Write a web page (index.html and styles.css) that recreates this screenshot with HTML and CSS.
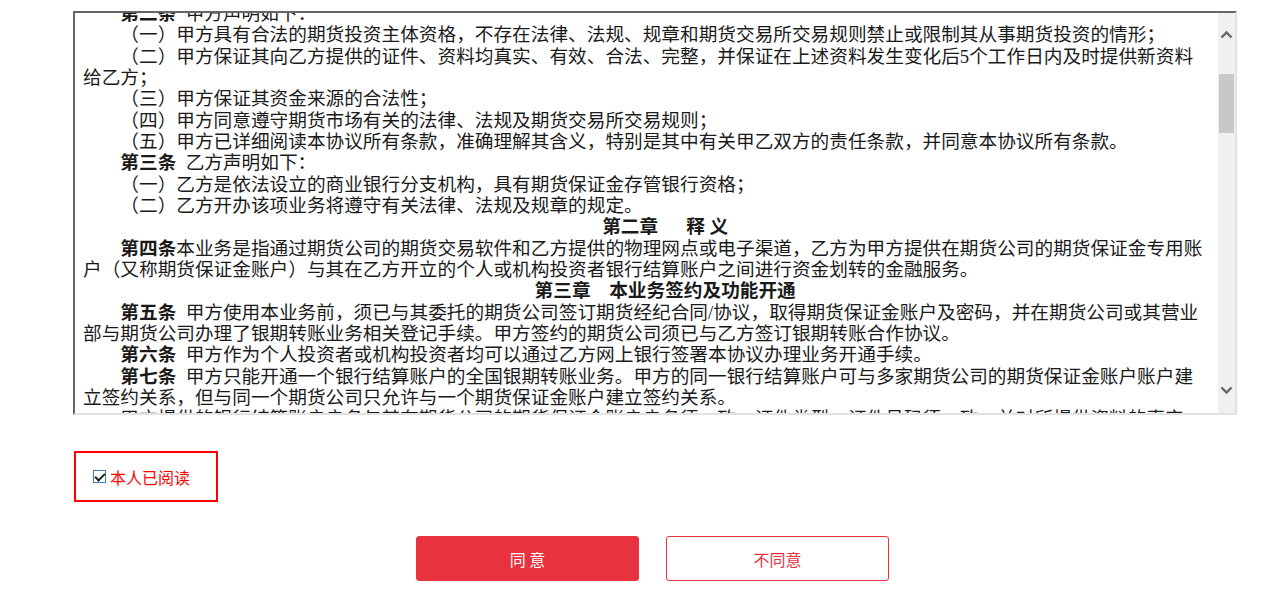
FILE: index.html
```html
<!DOCTYPE html>
<html lang="zh-CN">
<head>
    <meta charset="UTF-8">
    <meta name="viewport" content="width=device-width, initial-scale=1.0">
    <title>银期转账业务协议</title>
    <link rel="stylesheet" href="styles.css">
</head>
<body>

    <div class="container">
        <!-- agreement text, shown scrolled a little way down -->
        <div class="agreement">
            <div class="agreement-view">
                <div class="agreement-text">
                    <p><b>第二条</b>&ensp;甲方声明如下：</p>
                    <p>（一）甲方具有合法的期货投资主体资格，不存在法律、法规、规章和期货交易所交易规则禁止或限制其从事期货投资的情形；</p>
                    <p>（二）甲方保证其向乙方提供的证件、资料均真实、有效、合法、完整，并保证在上述资料发生变化后5个工作日内及时提供新资料给乙方；</p>
                    <p>（三）甲方保证其资金来源的合法性；</p>
                    <p>（四）甲方同意遵守期货市场有关的法律、法规及期货交易所交易规则；</p>
                    <p>（五）甲方已详细阅读本协议所有条款，准确理解其含义，特别是其中有关甲乙双方的责任条款，并同意本协议所有条款。</p>
                    <p><b>第三条</b>&ensp;乙方声明如下：</p>
                    <p>（一）乙方是依法设立的商业银行分支机构，具有期货保证金存管银行资格；</p>
                    <p>（二）乙方开办该项业务将遵守有关法律、法规及规章的规定。</p>
                    <p class="chapter">第二章　&nbsp;&nbsp;释&nbsp;义</p>
                    <p><b>第四条</b>本业务是指通过期货公司的期货交易软件和乙方提供的物理网点或电子渠道，乙方为甲方提供在期货公司的期货保证金专用账户（又称期货保证金账户）与其在乙方开立的个人或机构投资者银行结算账户之间进行资金划转的金融服务。</p>
                    <p class="chapter">第三章　本业务签约及功能开通</p>
                    <p><b>第五条</b>&ensp;甲方使用本业务前，须已与其委托的期货公司签订期货经纪合同/协议，取得期货保证金账户及密码，并在期货公司或其营业部与期货公司办理了银期转账业务相关登记手续。甲方签约的期货公司须已与乙方签订银期转账合作协议。</p>
                    <p><b>第六条</b>&ensp;甲方作为个人投资者或机构投资者均可以通过乙方网上银行签署本协议办理业务开通手续。</p>
                    <p><b>第七条</b>&ensp;甲方只能开通一个银行结算账户的全国银期转账业务。甲方的同一银行结算账户可与多家期货公司的期货保证金账户账户建立签约关系，但与同一个期货公司只允许与一个期货保证金账户建立签约关系。</p>
                    <p>甲方提供的银行结算账户户名与其在期货公司的期货保证金账户户名须一致，证件类型、证件号码须一致，并对所提供资料的真实性、合法性负责。</p>
                </div>
            </div>
            <div class="scrollbar">
                <span class="scroll-btn scroll-up">
                    <svg width="13" height="9" viewBox="0 0 13 9"><polyline points="1.5,7.5 6.5,2.5 11.5,7.5" fill="none" stroke="#666" stroke-width="2.4"/></svg>
                </span>
                <span class="scroll-track"><span class="scroll-thumb"></span></span>
                <span class="scroll-btn scroll-down">
                    <svg width="13" height="9" viewBox="0 0 13 9"><polyline points="1.5,1.5 6.5,6.5 11.5,1.5" fill="none" stroke="#666" stroke-width="2.4"/></svg>
                </span>
            </div>
        </div>

        <label class="read-box">
            <input type="checkbox" checked>
            <span>本人已阅读</span>
        </label>

        <div class="actions">
            <button class="btn btn-agree">同&nbsp;意</button>
            <button class="btn btn-refuse">不同意</button>
        </div>
    </div>

</body>
</html>
```

FILE: styles.css
```css
body {
    margin: 0;
    background: #fff;
    font-family: "Noto Sans CJK SC", "Liberation Sans", sans-serif;
}
.container {
    width: 1164px;
    padding: 11px 0 0 73px;
}
.agreement {
    display: flex;
    height: 400px;
    border: 2px solid;
    border-color: #666 #e2e2e2 #e2e2e2 #666;
}
.agreement-view {
    flex: 1;
    overflow: hidden;
    padding: 0 8px;
}
.agreement-text {
    margin-top: -10px;
    font-family: "Liberation Serif", "Noto Sans CJK SC", serif;
    font-size: 18.67px;
    line-height: 21.33px;
    color: #1a1a1a;
    text-spacing-trim: space-all;
}
.agreement-text p {
    margin: 0;
    text-indent: 2em;
}
.agreement-text .chapter {
    text-align: center;
    font-weight: bold;
}
.scrollbar {
    width: 17px;
    display: flex;
    flex-direction: column;
    background: #f0f0f0;
}
.scroll-btn {
    display: flex;
    justify-content: center;
    align-items: center;
}
.scroll-up {
    height: 42px;
}
.scroll-down {
    height: 46px;
}
.scroll-track {
    flex: 1;
    padding: 19px 1px 0;
}
.scroll-thumb {
    display: block;
    height: 59px;
    background: #c8c8c8;
}
.read-box {
    display: flex;
    align-items: center;
    width: 140px;
    height: 47px;
    margin: 36px 0 0 1px;
    border: 2px solid #f00;
    color: #f00;
    font-size: 16px;
    cursor: pointer;
}
.read-box input {
    appearance: none;
    position: relative;
    width: 13px;
    height: 13px;
    margin: 0 4px 0 17px;
    border: 1px solid #3c7fb1;
    background: #fff;
}
.read-box input:checked::after {
    content: "";
    position: absolute;
    left: 3px;
    top: 0;
    width: 4px;
    height: 8px;
    border: solid #222;
    border-width: 0 2px 2px 0;
    transform: rotate(45deg);
}
.actions {
    display: flex;
    justify-content: center;
    gap: 27px;
    margin-top: 34px;
    padding-right: 5px;
}
.btn {
    width: 223px;
    height: 45px;
    border-radius: 3px;
    font-family: "Noto Sans CJK SC", sans-serif;
    font-size: 16px;
    cursor: pointer;
}
.btn-agree {
    background: #e8333f;
    border: 1px solid #e8333f;
    color: #fff;
}
.btn-refuse {
    background: #fff;
    border: 1px solid #e8333f;
    color: #e8333f;
}
```
